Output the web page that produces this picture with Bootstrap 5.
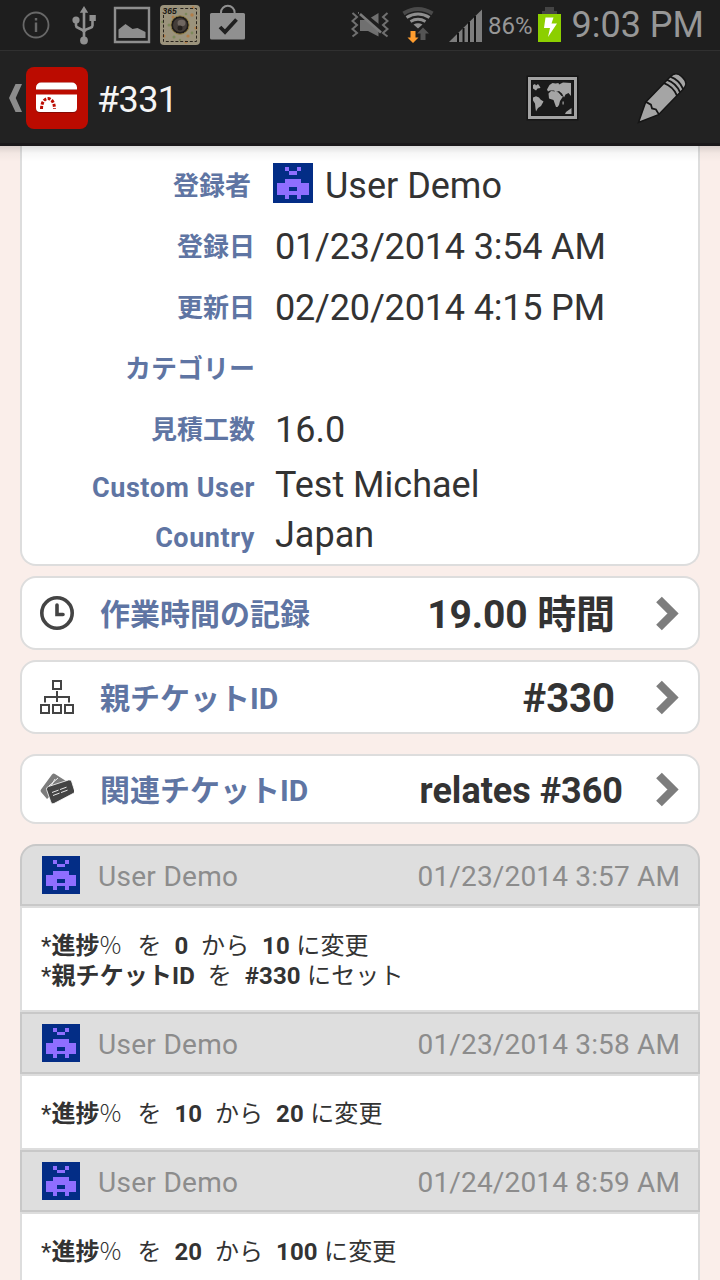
<!DOCTYPE html>
<html lang="ja">
<head>
<meta charset="utf-8">
<meta name="viewport" content="width=device-width, initial-scale=1">
<title>#331</title>
<link href="https://cdn.jsdelivr.net/npm/bootstrap@5.3.0/dist/css/bootstrap.min.css" rel="stylesheet">
<style>
body{font-family:Roboto,"Noto Sans CJK JP",sans-serif;background:#faeeea;color:#333;width:720px;height:1280px;overflow:hidden}
svg{display:block;flex:none}
.statusbar{height:50px;background:#1e1e1e;color:#979797}
.statusbar .pct{font-size:24px;line-height:50px;padding-top:2px}
.statusbar .clock{font-size:36px;line-height:50px;margin-right:16px}
.actionbar{height:96px;background:#222;border-top:1px solid #303030;border-bottom:3px solid #1a181a;color:#f5f5f5}
.actionbar h1{font-size:36px;font-weight:400;letter-spacing:-.6px;padding:7px 0 0 9px}
.topshade{left:0;right:0;top:146px;height:16px;background:linear-gradient(rgba(0,0,0,.13),rgba(0,0,0,.03) 45%,rgba(0,0,0,0))}
.panel{background:#fff;border:2px solid #ddd;border-radius:16px;margin:0 20px}
.details{height:420px;border-top:0;border-radius:0 0 16px 16px;padding-top:10px}
.field{height:61px;font-size:36px;line-height:61px}
.field svg{margin:7px 0 0 18px}
.field .date{letter-spacing:-.17px}
.field .text{padding-left:20px}
.field.short{height:49.5px;line-height:49.5px}
.field .name{width:233px;font-size:26px;font-weight:700;color:#5f75a3}
.field.short .name{font-size:27px;padding-top:3px;letter-spacing:.55px}
.linkrow{height:74px;padding:0 18px}
.linkrow .name{font-size:30px;font-weight:700;color:#5f75a3;margin-left:26px;padding-top:2px}
.linkrow .value{font-size:40px;font-weight:700;padding-top:4px}
.linkrow .hours{font-size:39px;letter-spacing:-.1px}
.linkrow .chevron{margin:2px 0 0 41px}
.linkrow.low{height:70px}
.linkrow.low .value{font-size:36px}
.linkrow.low .chevron{margin-left:33px}
.entry-head{height:62px;background:#dedede;border:2px solid #c8c8c8;color:#8c8c8c;font-size:28px;padding:0 18px 0 20px}
.entry-head span{padding-top:3px;letter-spacing:.16px}
.entry-head .who{margin-left:18px;letter-spacing:.3px}
.entry-head.first{border-radius:16px 16px 0 0}
.entry-body{background:#fff;border:2px solid #ddd;padding:21px 19px;font-size:24px;line-height:30px;letter-spacing:.13px;word-spacing:.3px;height:76px;white-space:nowrap}
.entry-body.two{height:106px}
.entry-body i{font-style:normal;font-family:"Noto Sans CJK JP",sans-serif;font-weight:300;display:inline-block;width:25px}
</style>
</head>
<body>
<svg width="0" height="0" class="position-absolute">
<defs>
<symbol id="avatar" viewBox="0 0 10 10" shape-rendering="crispEdges"><path fill="#032d86" d="M0 0h10v10H0z"/><path fill="#8f6eff" d="M3 1h1v1H3zM6 1h1v1H6zM4 2h2v1H4zM3 4h4v1h2v3H7v1H6V8H4v1H3V8H1V5h2zM4 6v1h2V6z" fill-rule="evenodd"/></symbol>
<symbol id="chev" viewBox="0 0 24 36"><path d="M3 3.500 17 17.500 3 31.500" fill="none" stroke="#7d7d7d" stroke-width="8"/></symbol>
</defs>
</svg>

<div class="statusbar d-flex align-items-center">
<svg width="250" height="50" viewBox="0 0 250 50">
<circle cx="36" cy="25" r="12.500" fill="none" stroke="#686868" stroke-width="1.800"/>
<path fill="#686868" d="M34.800 18h2.400v2.600h-2.400zM34.800 22.500h2.400V32h-2.400z"/>
<g stroke="#909090" fill="none" stroke-width="2.600"><path d="M84 11v29M76 20v5.500q0 1.500 2 2.300l4.500 2.200 1.500 2M92.500 19v6.500q0 1.500-2 2.300L86 29.500l-2 2"/></g>
<g fill="#909090"><path d="M79.800 12.800 84 6l4.200 6.800zM89.500 15h6.300v6h-6.300z"/><circle cx="76" cy="20" r="3.600"/><circle cx="84" cy="40.500" r="3.900"/></g>
<path d="M115 8h34v34h-34z" fill="none" stroke="#8e8e8e" stroke-width="2.400"/><path d="M118.500 38v-8.500l7-5.500 7 5 5-1 8 4v6z" fill="#8e8e8e"/>
<g>
<rect x="160" y="5" width="40" height="40" rx="4" fill="#9b937c"/>
<g fill="#b17d47"><circle cx="173" cy="17" r="1.500"/><circle cx="192" cy="15" r="1.700"/><circle cx="188" cy="36" r="1.600"/><circle cx="196" cy="28" r="1.600"/><circle cx="164" cy="36" r="1.500"/><circle cx="186" cy="42" r="1.500"/><circle cx="193" cy="7.500" r="1.300"/></g>
<g fill="#7d8a5b"><circle cx="169" cy="25" r="1.500"/><circle cx="174" cy="37" r="1.500"/><circle cx="192" cy="33" r="1.400"/><circle cx="186" cy="14" r="1.300"/><circle cx="162.500" cy="22" r="1.300"/><circle cx="180" cy="40" r="1.200"/></g>
<path d="M163.500 15v26.500h33V8.500h-18" fill="none" stroke="#29241d" stroke-width="1" stroke-dasharray="3 1.800"/>
<text x="162.500" y="13.800" font-family="Liberation Sans, sans-serif" font-size="8.500" font-weight="700" font-style="italic" fill="#1c1914">365</text>
<circle cx="180" cy="25" r="9.200" fill="#1f1c1a" stroke="#9a8648" stroke-width="1"/><circle cx="180" cy="25" r="7" fill="#443d39"/><ellipse cx="181.500" cy="23" rx="4" ry="3.300" fill="#6f6660"/><circle cx="180" cy="28" r="2.500" fill="#26211e"/>
</g>
<path d="M221 14v-1.500a6.800 6.800 0 0 1 13.600 0V14" fill="none" stroke="#909090" stroke-width="2"/><rect x="210" y="13" width="35" height="26.500" rx="1.500" fill="#909090"/><path d="m220 27 5 5L236.500 19.500" fill="none" stroke="#202020" stroke-width="3.800"/>
</svg>
<svg class="ms-auto" width="146" height="50" viewBox="342 0 146 50">
<g fill="none" stroke="#707070" stroke-width="2"><path d="m352.500 13 4.500 4-4.500 4 4.500 4-4.500 4 4.500 4-4.500 3.500M359 13l-1 0"/><path d="m387.500 13-4.500 4 4.500 4-4.500 4 4.500 4-4.500 4 4.500 3.500"/></g>
<path fill="#707070" d="M360 20h7l11.500-7v23.500L368 31h-8z"/><path d="m360 12 22 18" stroke="#1e1e1e" stroke-width="5"/><path d="m360 14 21 18.500" stroke="#7c7c7c" stroke-width="2.600"/>
<g fill="none"><path d="M403.500 13.500q14.500-9 29 0" stroke="#4a4a4a" stroke-width="4"/><path d="M406.500 17.500q11.500-7 23 0" stroke="#8f8f8f" stroke-width="3.200"/><path d="M410.500 21.500q7.500-4.500 15 0" stroke="#8f8f8f" stroke-width="2.800"/></g><path d="M413.500 24.500q4.500-2.500 9 0l-4.500 4z" fill="#8f8f8f"/>
<path d="M410.500 31h5v6.500h3L413 43l-5.500-5.500h3z" fill="#ff9d2e"/><path d="m423 27.500 6 6h-3.500v6.500h-5v-6.500H417z" fill="#555"/>
<path d="M449 42 482 9.500V42z" fill="#7d7d7d"/><path d="M458 33v9M463.500 28v14M469 22v20M475 16v26" stroke="#111" stroke-width="2"/>
</svg>
<span class="pct">86%</span>
<svg width="39" height="50" viewBox="533 0 39 50"><path d="M545 7h9v4h3v3h-15v-3h3z" fill="#444"/><path d="M538 14h23v28h-23z" fill="#8ccf00"/><path d="m545.500 17.500 8 0-2 6h5.500L548 37l2-9h-6z" fill="#fff"/></svg>
<span class="clock">9:03 PM</span>
</div>

<nav class="actionbar d-flex align-items-center">
<svg width="88" height="92" viewBox="0 51 88 92">
<path d="M15.500 84H22l-6.300 14L22 112h-6.500L9 98z" fill="#8c8c8c"/>
<rect x="26" y="67" width="62" height="62" rx="8" fill="#bb0b00"/>
<g transform="translate(0 1)"><path d="M36 89v-2.500a5 5 0 0 1 5-5h31a5 5 0 0 1 5 5V89z" fill="#850a04"/><path d="M36 94h41v14a4 4 0 0 1-4 4H40a4 4 0 0 1-4-4z" fill="#850a04"/></g>
<path d="M36 89.500v-2a5 5 0 0 1 5-5h31a5 5 0 0 1 5 5v2zM36 94.500h41V108a4 4 0 0 1-4 4H40a4 4 0 0 1-4-4z" fill="#fff"/>
<path d="M41.500 109c0-14 13-14 13 0" fill="none" stroke="#bb0b00" stroke-width="3" stroke-dasharray="3 1.400"/>
</svg>
<h1 class="mb-0">#331</h1>
<svg class="ms-auto" width="200" height="92" viewBox="520 51 200 92">
<path d="M529.500 78.500h46v39h-46z" fill="none" stroke="#151515" stroke-width="6"/><path d="M529.500 78.500h46v39h-46z" fill="none" stroke="#a3a3a3" stroke-width="3"/>
<path d="M532 81h41v34h-41z" fill="#1a1a1a"/>
<g fill="#a5a5a5"><path d="m533 85 2-1 1 1.500 2-1.500 1.500 2 1 2-3 .5-1.500 2-3-2zM533 97.500l3-1.200 3 1.200 1.500 2 3 2-2.500 4.500-3 2-2 3.500-.5-3-.5-5-2-3zM549.500 85l3-2 3 .5 3-.5.5 1.500 4-2 8 .5v13l-2.500-3-3 1.500-1.500 3-2-4-3-2.500-3 1-2-1.500-4 0-2 1-1-2zM548.500 93.500l2.500-2.500 5 .5 2.500 1 3 3.500 1.500.5-3 4.500-1 4-1.500 2h-1.500l-2.500-7-4.500-1.500zM562.500 101.500h1.200v3h-1.200zM571.500 108v6h-6.500l1-2z"/></g>
<g transform="translate(638.500 122.500) rotate(44)"><path d="M0 0-9 -19.500V-55q0-8 8-8h2q8 0 8 8V-19.500z" fill="#a5a5a5" stroke="#151515" stroke-width="1.500"/><path d="m-9-20 5.500-1.500L0-19.500l3.500-2L9-20M-9-46q9-4 18 0M-9-50.500q9-4 18 0M-9-55q9-4 18 0" fill="none" stroke="#151515" stroke-width="1.800"/></g>
</svg>
</nav>
<div class="topshade position-absolute"></div>

<main>
<section class="panel details">
<div class="field d-flex"><div class="name text-end pe-1">登録者</div><svg width="40" height="40"><use href="#avatar"/></svg><span class="ps-2 ms-1">User Demo</span></div>
<div class="field d-flex"><div class="name text-end">登録日</div><span class="text date">01/23/2014 3:54 AM</span></div>
<div class="field d-flex"><div class="name text-end">更新日</div><span class="text date">02/20/2014 4:15 PM</span></div>
<div class="field d-flex"><div class="name text-end">カテゴリー</div></div>
<div class="field d-flex"><div class="name text-end">見積工数</div><span class="text">16.0</span></div>
<div class="field short d-flex"><div class="name text-end">Custom User</div><span class="text">Test Michael</span></div>
<div class="field short d-flex"><div class="name text-end">Country</div><span class="text">Japan</span></div>
</section>

<section class="panel linkrow d-flex align-items-center" style="margin-top:10px">
<svg width="34" height="34" viewBox="0 0 34 34" fill="none" stroke="#444"><circle cx="17" cy="17" r="15.200" stroke-width="3.600"/><path d="M17 9v9.500h6" stroke-width="3.600" stroke-linecap="round"/></svg>
<span class="name">作業時間の記録</span><span class="value hours ms-auto">19.00 時間</span>
<svg class="chevron" width="24" height="36"><use href="#chev"/></svg>
</section>
<section class="panel linkrow d-flex align-items-center" style="margin-top:10px">
<svg width="34" height="34" viewBox="0 0 34 34" fill="none" stroke="#444" stroke-width="2"><path d="M13 1h8v8h-8zM1 25h8v8H1zM13 25h8v8h-8zM25 25h8v8h-8zM17 11v11M5 22.500V17h24v5.500"/></svg>
<span class="name">親チケットID</span><span class="value ms-auto">#330</span>
<svg class="chevron" width="24" height="36"><use href="#chev"/></svg>
</section>
<section class="panel linkrow low d-flex align-items-center" style="margin-top:20px">
<svg width="34" height="34" viewBox="0 0 34 34"><path d="M12 2.500Q13.500 1 15 2l11 7L7 27l-6-7q-1-1.500 0-2.500z" fill="#7c7c7c"/><path d="m9 14 9-8M11 14l4-7" stroke="#eee" stroke-width="1"/><path d="m8.500 14.500 20-6.500q2-.5 3 1L34.500 18.500q.5 2-1 2.800L14 31.500q-2 .8-3-1L6.500 17.500q-.5-2 2-3z" fill="#444" stroke="#fff" stroke-width=".8"/><path d="m12 20.500 15-5.500M13 23.500l15-5.500" stroke="#e8e8e8" stroke-width="1" stroke-dasharray="7 1.500"/></svg>
<span class="name">関連チケットID</span><span class="value ms-auto">relates #360</span>
<svg class="chevron" width="24" height="36"><use href="#chev"/></svg>
</section>

<section style="margin:20px 20px 0">
<div class="entry-head first d-flex align-items-center"><svg width="38" height="38"><use href="#avatar"/></svg><span class="who">User Demo</span><span class="ms-auto">01/23/2014 3:57 AM</span></div>
<div class="entry-body two">*<b>進捗</b><i>%</i>&nbsp; を&nbsp; <b>0</b>&nbsp; から&nbsp; <b>10</b> に変更<br>*<b>親チケットID</b>&nbsp; を&nbsp; <b>#330</b> にセット</div>
<div class="entry-head d-flex align-items-center"><svg width="38" height="38"><use href="#avatar"/></svg><span class="who">User Demo</span><span class="ms-auto">01/23/2014 3:58 AM</span></div>
<div class="entry-body">*<b>進捗</b><i>%</i>&nbsp; を&nbsp; <b>10</b>&nbsp; から&nbsp; <b>20</b> に変更</div>
<div class="entry-head d-flex align-items-center"><svg width="38" height="38"><use href="#avatar"/></svg><span class="who">User Demo</span><span class="ms-auto">01/24/2014 8:59 AM</span></div>
<div class="entry-body">*<b>進捗</b><i>%</i>&nbsp; を&nbsp; <b>20</b>&nbsp; から&nbsp; <b>100</b> に変更</div>
</section>
</main>
<script src="https://cdn.jsdelivr.net/npm/bootstrap@5.3.0/dist/js/bootstrap.bundle.min.js"></script>
</body>
</html>
